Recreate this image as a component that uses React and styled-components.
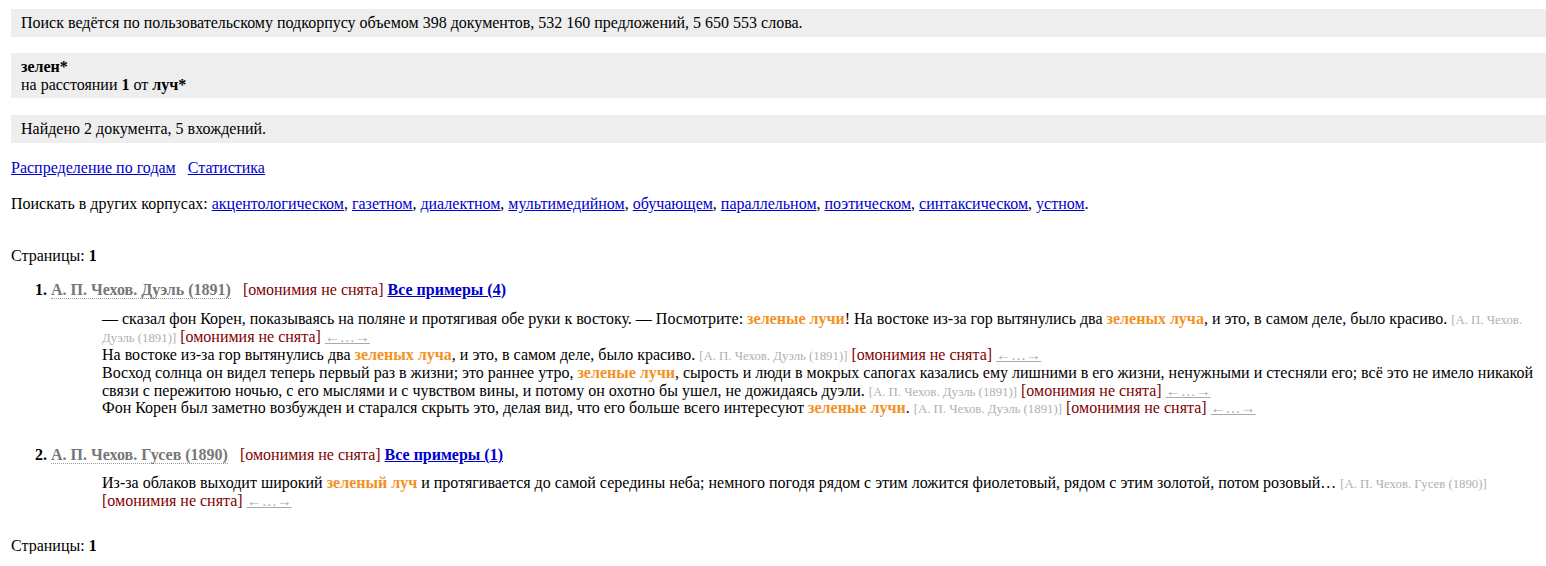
import React from "react";
import styled, { createGlobalStyle } from "styled-components";

const GlobalStyle = createGlobalStyle`
  body {
    margin: 9px 0 0 11px;
    background: #fff;
    color: #000;
    font-family: "Liberation Serif", "Times New Roman", serif;
    font-size: 16px;
    line-height: 17.8px;
  }
`;

const documents = [
  {
    n: 1,
    title: "А. П. Чехов. Дуэль (1891)",
    count: 4,
    examples: [
      [
        "— сказал фон Корен, показываясь на поляне и протягивая обе руки к востоку. — Посмотрите: ",
        { hit: "зеленые лучи" },
        "! На востоке из-за гор вытянулись два ",
        { hit: "зеленых луча" },
        ", и это, в самом деле, было красиво.",
      ],
      [
        "На востоке из-за гор вытянулись два ",
        { hit: "зеленых луча" },
        ", и это, в самом деле, было красиво.",
      ],
      [
        "Восход солнца он видел теперь первый раз в жизни; это раннее утро, ",
        { hit: "зеленые лучи" },
        ", сырость и люди в мокрых сапогах казались ему лишними в его жизни, ненужными и стесняли его; всё это не имело никакой связи с пережитою ночью, с его мыслями и с чувством вины, и потому он охотно бы ушел, не дожидаясь дуэли.",
      ],
      [
        "Фон Корен был заметно возбужден и старался скрыть это, делая вид, что его больше всего интересуют ",
        { hit: "зеленые лучи" },
        ".",
      ],
    ],
  },
  {
    n: 2,
    title: "А. П. Чехов. Гусев (1890)",
    count: 1,
    examples: [
      [
        "Из-за облаков выходит широкий ",
        { hit: "зеленый луч" },
        " и протягивается до самой середины неба; немного погодя рядом с этим ложится фиолетовый, рядом с этим золотой, потом розовый…",
      ],
    ],
  },
];

const corpora = [
  "акцентологическом",
  "газетном",
  "диалектном",
  "мультимедийном",
  "обучающем",
  "параллельном",
  "поэтическом",
  "синтаксическом",
  "устном",
];

const InfoBox = styled.div`
  background: #eeeeee;
  padding: 5px 10px;
  margin-bottom: ${(p) => p.$gap || 16}px;
`;

const Links = styled.div`
  margin-top: 16px;
  display: flex;
  gap: 12px;
`;

const Link = styled.a`
  color: #0000cc;
  text-decoration: underline;
  cursor: pointer;
`;

const Other = styled.div`
  margin-top: 18px;
`;

const Pages = styled.div`
  margin-top: ${(p) => p.$top}px;
`;

const Doc = styled.div`
  margin-top: ${(p) => p.$top}px;
`;

const DocHead = styled.div`
  padding-left: 24px;
  font-weight: bold;
`;

const DocTitle = styled.span`
  color: #777;
  border-bottom: 1px dotted #999;
  margin-right: 12px;
`;

const Homonymy = styled.span`
  color: #800000;
  font-weight: normal;
`;

const AllLink = styled(Link)`
  font-weight: bold;
`;

const Examples = styled.div`
  margin-top: ${(p) => p.$top}px;
  padding: 0 10px 0 91px;
`;

const Example = styled.div``;

const Hit = styled.b`
  color: #f39123;
`;

const Source = styled.span`
  color: #b0b0b0;
  font-size: 12.8px;
  line-height: 1;
`;

const Context = styled.a`
  color: #aaa;
  font-size: 15px;
  line-height: 1;
  text-decoration: underline;
`;

const Sentence = ({ parts, title }) => (
  <Example>
    {parts.map((p, i) =>
      typeof p === "string" ? (
        <React.Fragment key={i}>{p}</React.Fragment>
      ) : (
        <Hit key={i}>{p.hit}</Hit>
      )
    )}{" "}
    <Source>[{title}]</Source> <Homonymy>[омонимия не снята]</Homonymy>{" "}
    <Context>←…→</Context>
  </Example>
);

const App = () => {
  return (
    <>
      <GlobalStyle />
      <InfoBox>
        Поиск ведётся по пользовательскому подкорпусу объемом 398 документов,
        532 160 предложений, 5 650 553 слова.
      </InfoBox>
      <InfoBox $gap={17}>
        <b>зелен*</b>
        <br />
        на расстоянии <b>1</b> от <b>луч*</b>
      </InfoBox>
      <InfoBox $gap={0}>Найдено 2 документа, 5 вхождений.</InfoBox>
      <Links>
        <Link>Распределение по годам</Link>
        <Link>Статистика</Link>
      </Links>
      <Other>
        Поискать в других корпусах:{" "}
        {corpora.map((c, i) => (
          <React.Fragment key={c}>
            <Link>{c}</Link>
            {i < corpora.length - 1 ? ", " : "."}
          </React.Fragment>
        ))}
      </Other>
      <Pages $top={34}>
        Страницы: <b>1</b>
      </Pages>
      {documents.map((d, i) => (
        <Doc key={d.n} $top={i === 0 ? 16 : 29}>
          <DocHead>
            {d.n}. <DocTitle>{d.title}</DocTitle>
            <Homonymy>[омонимия не снята]</Homonymy>{" "}
            <AllLink>Все примеры ({d.count})</AllLink>
          </DocHead>
          <Examples $top={i === 0 ? 12 : 10}>
            {d.examples.map((ex, j) => (
              <Sentence key={j} parts={ex} title={d.title} />
            ))}
          </Examples>
        </Doc>
      ))}
      <Pages $top={27}>
        Страницы: <b>1</b>
      </Pages>
    </>
  );
};

export default App;
